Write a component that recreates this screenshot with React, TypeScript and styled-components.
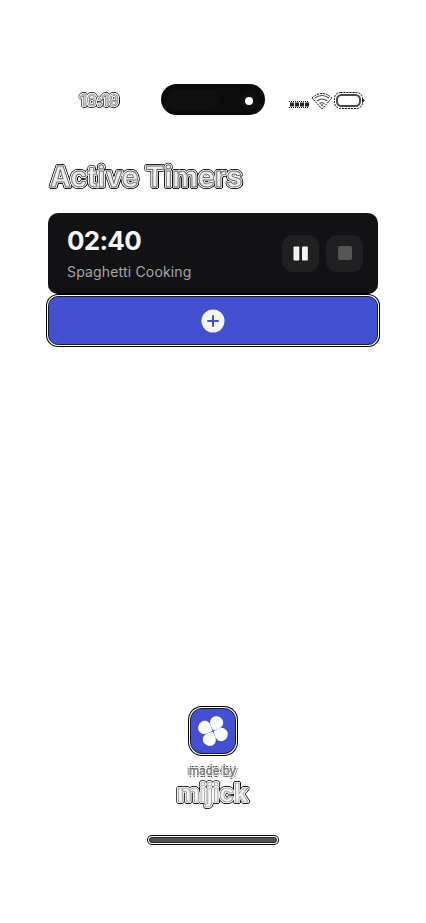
import React from "react";
import styled, { createGlobalStyle } from "styled-components";

const Global = createGlobalStyle`
  * { box-sizing: border-box; }
  html, body { margin: 0; background: #fff; }
  body { font-family: Inter, "Liberation Sans", sans-serif; }
`;

const ring = (r: number, color: string, steps = 16) =>
  Array.from({ length: steps }, (_, i) => {
    const a = (i / steps) * Math.PI * 2;
    return `${Math.round(Math.cos(a) * r)}px ${Math.round(Math.sin(a) * r)}px 0 ${color}`;
  }).join(",");

const Screen = styled.main`
  width: 426px;
  height: 923px;
  display: flex;
  flex-direction: column;
  padding: 84px 48px 80px;
  background: #fff;
  overflow: hidden;
`;

const StatusBar = styled.header`
  height: 31px;
  display: grid;
  grid-template-columns: 113px 104px 1fr;
  align-items: center;
`;

const Clock = styled.time`
  padding: 3px 0 0 32px;
  font-size: 15.5px;
  line-height: 18px;
  font-weight: 500;
  letter-spacing: 0.4px;
  color: #e4e4e4;
  opacity: 0.999;
  will-change: transform;
  -webkit-text-stroke: 0.6px #666;
  text-shadow: ${[ring(1, "#fff"), "2px 1px 0 #000", ring(2, "#444")].join(",")};
`;

const Island = styled.div`
  height: 31px;
  border-radius: 16px;
  background: #0b0b0c;
  display: flex;
  align-items: center;
  justify-content: space-between;
  padding: 0 6px 0 5px;
`;

const IslandSensor = styled.div`
  width: 54px;
  height: 20px;
  border-radius: 10px;
  background: #101011;
`;

const IslandLens = styled.div`
  width: 20px;
  height: 20px;
  border-radius: 50%;
  background: #101011;
  display: grid;
  place-items: center;
  &::after {
    content: "";
    width: 8px;
    height: 8px;
    margin: 2px 0 0 0;
    border-radius: 50%;
    background: #fff;
  }
`;

const StatusIcons = styled.svg`
  display: block;
  margin: 2px 0 0 22px;
`;

const Title = styled.h1`
  margin: 45px 0 0 2px;
  height: 34px;
  font-size: 28px;
  line-height: 34px;
  font-weight: 700;
  letter-spacing: 0.2px;
  white-space: nowrap;
  color: #eee;
  opacity: 0.999;
  will-change: transform;
  -webkit-text-stroke: 0.9px #666;
  text-shadow: ${[ring(1, "#fff"), "2px 1px 0 #000", ring(2, "#222", 16)].join(",")};
`;

const TimerCard = styled.section`
  height: 81px;
  margin-top: 19px;
  padding: 0 15px 0 19px;
  width: 330px;
  border-radius: 10px;
  background: #121214;
  border-bottom: 1px solid #000;
  display: flex;
  align-items: center;
  gap: 7px;
`;

const TimerText = styled.div`
  flex: 1;
`;

const Remaining = styled.div`
  font-size: 26px;
  line-height: 32px;
  font-weight: 700;
  letter-spacing: -0.75px;
  color: #f4f4f4;
`;

const Label = styled.div`
  margin-top: 6px;
  font-size: 14px;
  line-height: 18px;
  letter-spacing: 0.17px;
  color: #a5a5a5;
`;

const ControlButton = styled.button`
  width: 37px;
  height: 37px;
  padding: 0;
  border: 0;
  border-radius: 11px;
  background: #202022;
  display: grid;
  place-items: center;
`;

const AddButton = styled.button`
  width: 330px;
  height: 49px;
  margin-top: 2px;
  padding: 0;
  border: 1px solid #17193f;
  border-radius: 10px;
  background: #4350d0;
  box-shadow: 0 0 0 1px #fff, 1px 0 0 1px #000, 0 0 0 2px #000;
  display: grid;
  place-items: center;
`;

const Footer = styled.footer`
  margin-top: auto;
  display: flex;
  flex-direction: column;
  align-items: center;
`;

const Logo = styled.div`
  width: 46px;
  height: 46px;
  border-radius: 12px;
  border: 1px solid #17193f;
  background: #4350d0;
  box-shadow: 0 0 0 1px #fff, 0 0 0 2px #000;
  display: grid;
  place-items: center;
`;

const MadeBy = styled.div`
  margin-top: 10px;
  font-size: 11.5px;
  line-height: 14px;
  font-weight: 500;
  color: #999;
  opacity: 0.999;
  will-change: transform;
  -webkit-text-stroke: 0.3px #444;
  text-shadow: ${[ring(1, "#fff", 8), ring(2, "#555", 8)].join(",")};
`;

const Brand = styled.div`
  height: 30px;
  font-size: 25px;
  line-height: 30px;
  font-weight: 700;
  letter-spacing: -0.2px;
  color: #f4f4f4;
  opacity: 0.999;
  will-change: transform;
  -webkit-text-stroke: 0.7px #888;
  text-shadow: ${[ring(1, "#fff"), ring(2, "#222")].join(",")};
`;

const HomeIndicator = styled.div`
  width: 128px;
  height: 6px;
  margin-top: 29px;
  border: 1px solid #222;
  border-radius: 3px;
  background: #555;
  box-shadow: 0 0 0 1px #fff, 0 0 0 2px #000;
`;

export default function App() {
  return (
    <Screen>
      <Global />
      <StatusBar>
        <Clock>16:19</Clock>
        <Island>
          <IslandSensor />
          <IslandLens />
        </Island>
        <StatusIcons width="80" height="20" viewBox="0 0 80 20" fill="none">
          <path d="M2 10.5H22M2 16.5H22" stroke="#000" strokeDasharray="1 1" />
          <path d="M3 13.5H22" stroke="#222" strokeWidth="4" strokeDasharray="4 1" />
          <path d="M25 7Q35 -2 45 7L35 18Z" fill="#fff" stroke="#000" strokeDasharray="2 1" />
          <path d="M28 7Q35 2 42 7M30 10Q35 6 40 10M32.5 12.5Q35 11 37.5 12.5" stroke="#444" strokeWidth="1.2" />
          <path d="M33.5 13.5H36.5L35 15.5Z" fill="#333" />
          <rect x="47.5" y="1.500" width="28" height="16" rx="6" stroke="#000" strokeDasharray="2 1" />
          <rect x="50" y="4" width="23" height="11" rx="4.500" fill="#fff" stroke="#484848" strokeWidth="2" />
          <path d="M75 7L78 9.500L75 12Z" fill="#222" />
        </StatusIcons>
      </StatusBar>
      <Title>Active Timers</Title>
      <TimerCard>
        <TimerText>
          <Remaining>02:40</Remaining>
          <Label>Spaghetti Cooking</Label>
        </TimerText>
        <ControlButton aria-label="Pause">
          <svg width="15" height="15" viewBox="0 0 15 15" fill="#f4f4f4">
            <rect x="0.500" y="0.500" width="5.800" height="14" rx="0.800" />
            <rect x="9" y="0.500" width="5.800" height="14" rx="0.800" />
          </svg>
        </ControlButton>
        <ControlButton aria-label="Stop">
          <svg width="14" height="14" viewBox="0 0 14 14">
            <rect width="14" height="14" rx="2" fill="#555" />
          </svg>
        </ControlButton>
      </TimerCard>
      <AddButton aria-label="Add timer">
        <svg width="24" height="24" viewBox="0 0 24 24">
          <circle cx="12" cy="12" r="11.500" fill="#f4f4f4" />
          <path d="M12 7V17M7 12H17" stroke="#4350d0" strokeWidth="2" strokeLinecap="round" />
        </svg>
      </AddButton>
      <Footer>
        <Logo>
          <svg width="34" height="34" viewBox="-17 -17 34 34" fill="#fff">
            <g transform="rotate(23)">
              {[0, 90, 180, 270].map((a) => (
                <path
                  key={a}
                  transform={`rotate(${a})`}
                  d="M0 -0.700C-2 -2.500 -6.600 -5 -6.600 -9.300C-6.600 -13 -3.500 -15.400 0 -15.400C3.500 -15.400 6.600 -13 6.600 -9.300C6.600 -5 2 -2.500 0 -0.700Z"
                />
              ))}
            </g>
          </svg>
        </Logo>
        <MadeBy>made by</MadeBy>
        <Brand>mijick</Brand>
        <HomeIndicator />
      </Footer>
    </Screen>
  );
}
